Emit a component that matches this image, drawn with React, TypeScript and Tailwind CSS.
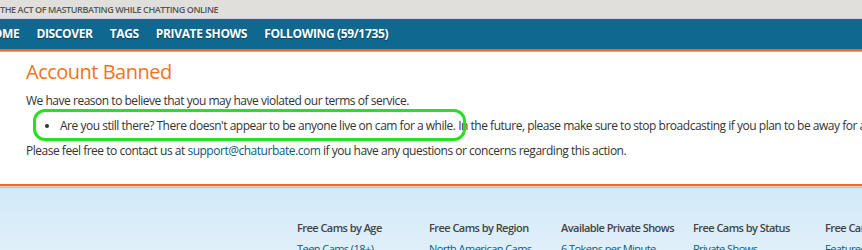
import React from "react";

const font = { fontFamily: '"Open Sans", "DejaVu Sans", sans-serif' };

export default function App() {
  const cols = [
    { h: "Free Cams by Age", l: "Teen Cams (18+)" },
    { h: "Free Cams by Region", l: "North American Cams" },
    { h: "Available Private Shows", l: "6 Tokens per Minute" },
    { h: "Free Cams by Status", l: "Private Shows" },
    { h: "Free Cams by Type", l: "Featured Cams" },
  ];
  return (
    <div className="w-[862px] h-[250px] overflow-hidden bg-white" style={font}>
      <div className="h-[19px] bg-[#e0dfdb] border-b border-[#cdd3d6] flex items-center">
        <span className="text-[9px] leading-none text-[#555] font-semibold tracking-[-0.4px] whitespace-nowrap">
          THE ACT OF MASTURBATING WHILE CHATTING ONLINE
        </span>
      </div>
      <div className="h-[30px] bg-[#0e6890] flex items-center overflow-hidden">
        <div className="flex gap-[17px] -ml-[16px] text-white font-bold text-[12px] tracking-[-0.35px] whitespace-nowrap [text-shadow:0_1px_1px_rgba(0,0,0,0.4)]">
          <span>HOME</span>
          <span>DISCOVER</span>
          <span>TAGS</span>
          <span>PRIVATE SHOWS</span>
          <span>FOLLOWING (59/1735)</span>
        </div>
      </div>
      <div className="h-[2px] bg-[#f26b1d]" />
      <div className="h-[1px] bg-[#f9a36a]" />
      <div className="pl-[26px] pt-[8px] h-[132px] text-[12px] text-[#333] whitespace-nowrap">
        <h1 className="text-[20px] leading-[24px] text-[#f47321] font-normal tracking-[-0.5px]">Account Banned</h1>
        <p className="mt-[9px] leading-[16px] tracking-[-0.48px]">We have reason to believe that you may have violated our terms of service.</p>
        <div className="relative mt-[9px] h-[16px]">
          <div className="absolute left-[7px] top-[-9px] w-[433px] h-[32px] border-[3px] border-[#28e020] rounded-[12px]" />
          <ul className="list-disc pl-[34px] leading-[16px] tracking-[-0.48px]">
            <li>Are you still there? There doesn't appear to be anyone live on cam for a while. In the future, please make sure to stop broadcasting if you plan to be away for a while.</li>
          </ul>
        </div>
        <p className="mt-[9px] leading-[16px] tracking-[-0.48px]">
          Please feel free to contact us at <span className="text-[#0a5a83]">support@chaturbate.com</span> if you have any questions or concerns regarding this action.
        </p>
      </div>
      <div className="h-[2px] bg-[#f26b1d]" />
      <div className="h-[1px] bg-[#fbd3b8]" />
      <div className="h-[1px] bg-[#9cc8ea]" />
      <div className="h-[200px] bg-gradient-to-b from-[#d2e9f8] to-[#ffffff] flex pl-[297px] pt-[33px] whitespace-nowrap">
        {cols.map((c) => (
          <div key={c.h} className="w-[132px] shrink-0 text-[11px] tracking-[-0.55px]">
            <div className="font-semibold text-[#444] leading-[14px]">{c.h}</div>
            <div className="mt-[7px] text-[#0a5a83] leading-[14px]">{c.l}</div>
          </div>
        ))}
      </div>
    </div>
  );
}
